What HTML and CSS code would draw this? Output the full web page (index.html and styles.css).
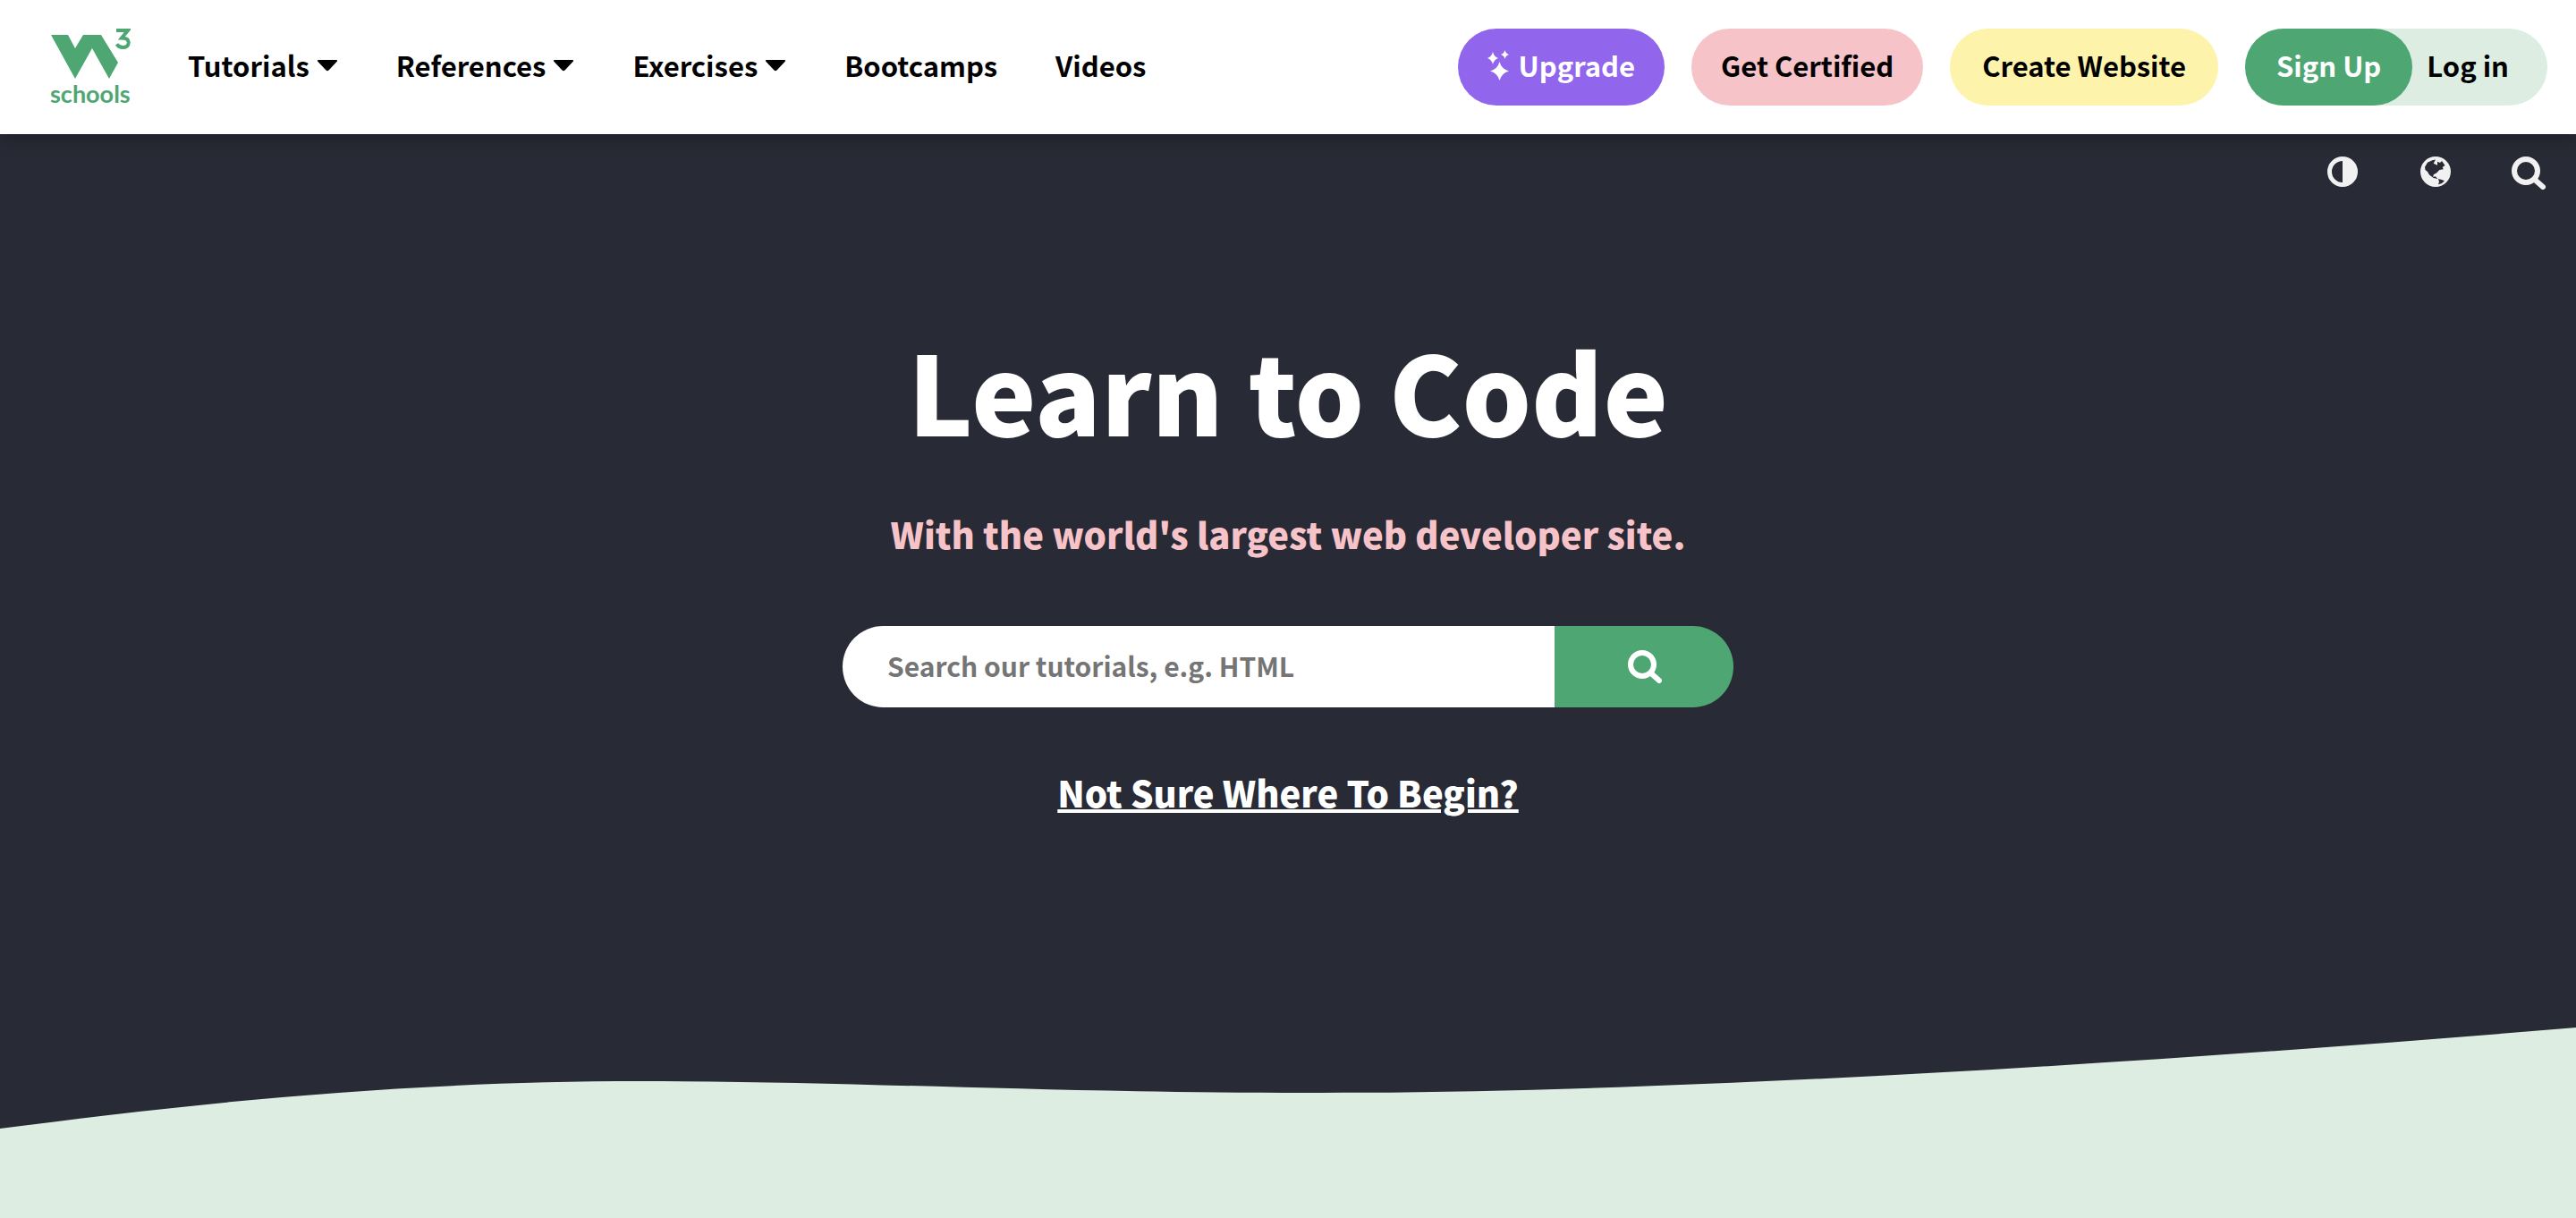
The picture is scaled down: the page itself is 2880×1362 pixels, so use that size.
FILE: index.html
```html
<!DOCTYPE html>
<html lang="en">
<head>
<meta charset="utf-8">
<title>W3Schools Online Web Tutorials</title>
<link rel="stylesheet" href="styles.css">
</head>
<body>
<header class="topbar">
  <a class="logo" href="#" aria-label="W3Schools home">
    <svg class="logo-mark" viewBox="0 0 90 60" aria-hidden="true">
      <path d="M1 8H20L28 23L37 8H57L76 39L66 57L47 23L28 57Z"/>
      <path class="logo-three" d="M74 3H87L80 11.500C85.500 11.500 87.800 13.500 87.800 16.600C87.800 20 85 22 81.500 22C78 22 76 20.500 74.500 18.300"/>
    </svg>
    <span class="logo-word">schools</span>
  </a>
  <nav class="menu">
    <button class="menu-item" type="button">Tutorials<svg class="caret" viewBox="0 0 24 14" aria-hidden="true"><path d="M2 1H22Q24 1 22.500 3L13.500 12.500Q12 14 10.500 12.500L1.500 3Q0 1 2 1Z"/></svg></button>
    <button class="menu-item" type="button">References<svg class="caret" viewBox="0 0 24 14" aria-hidden="true"><path d="M2 1H22Q24 1 22.500 3L13.500 12.500Q12 14 10.500 12.500L1.500 3Q0 1 2 1Z"/></svg></button>
    <button class="menu-item" type="button">Exercises<svg class="caret" viewBox="0 0 24 14" aria-hidden="true"><path d="M2 1H22Q24 1 22.500 3L13.500 12.500Q12 14 10.500 12.500L1.500 3Q0 1 2 1Z"/></svg></button>
    <a class="menu-item" href="#">Bootcamps</a>
    <a class="menu-item" href="#">Videos</a>
  </nav>
  <div class="actions">
    <a class="pill pill-upgrade" href="#"><svg class="sparkles" viewBox="0 0 24 34" aria-hidden="true"><path d="M13.500 13Q15.500 21 24 23.500Q15.500 26 13.500 34Q11.500 26 3 23.500Q11.500 21 13.500 13ZM6 2Q7.500 7.500 12 9Q7.500 10.500 6 16Q4.500 10.500 0 9Q4.500 7.500 6 2ZM19.500 0Q20.500 4 24 5Q20.500 6 19.500 10Q18.500 6 15 5Q18.500 4 19.500 0Z"/></svg>Upgrade</a>
    <a class="pill pill-certified" href="#">Get Certified</a>
    <a class="pill pill-website" href="#">Create Website</a>
    <div class="account">
      <a class="pill pill-signup" href="#">Sign Up</a>
      <a class="login" href="#">Log in</a>
    </div>
  </div>
</header>
<main class="hero">
  <div class="tools">
    <button class="tool" type="button" aria-label="Dark mode"><svg class="tool-icon" viewBox="0 0 40 40" aria-hidden="true"><circle class="ring" cx="20" cy="20" r="14.500"/><path d="M20 5A15 15 0 0 1 20 35Z"/></svg></button>
    <button class="tool" type="button" aria-label="Language"><svg class="tool-icon" viewBox="0 0 40 40" aria-hidden="true"><circle cx="20" cy="20" r="17"/><path class="land" d="M8 14.700L11 9.700L16.300 7.300L20 6.500L17.700 10.700L22 12.700L22 8.700L25 10L27 8L30.500 13L27.700 15L28.700 17.300L24.300 18L21.300 21.300L17.700 23.300L17.300 26L19.700 25.300L22.500 28L17.700 27L13 23.500L11 20L8.500 18ZM23 28L27 29L30 30.300L27 33L23 34.300L24 31.300Z"/></svg></button>
    <button class="tool" type="button" aria-label="Search"><svg class="tool-icon" viewBox="0 0 40 40" aria-hidden="true"><circle class="lens" cx="17" cy="19" r="13"/><path class="lens" d="M27 29L36 37"/></svg></button>
  </div>
  <section class="intro">
    <h1 class="title">Learn to Code</h1>
    <p class="tagline">With the world's largest web developer site.</p>
    <form class="search">
      <input class="search-field" type="text" placeholder="Search our tutorials, e.g. HTML" aria-label="Search our tutorials">
      <button class="search-button" type="button" aria-label="Search"><svg class="tool-icon" viewBox="0 0 40 40" aria-hidden="true"><circle class="lens" cx="18" cy="17" r="13"/><path class="lens" d="M28 27L37 35"/></svg></button>
    </form>
    <a class="begin" href="#">Not Sure Where To Begin?</a>
  </section>
  <svg class="wave" viewBox="0 0 2880 213" preserveAspectRatio="none" aria-hidden="true">
    <path d="M0 113C200 87 440 60 716 60C960 60 1160 73 1460 73C1860 74 2400 40 2880 0V213H0Z"/>
  </svg>
</main>
</body>
</html>
```
FILE: styles.css
```css
* { box-sizing: border-box; }
body {
  margin: 0;
  min-height: 100vh;
  display: flex;
  flex-direction: column;
  font-family: "Noto Sans CJK SC", "Noto Sans", sans-serif;
  font-size: 31px;
  font-weight: 700;
  line-height: 48px;
  color: #000;
  background: #ddede1;
}
a { color: inherit; text-decoration: none; }
button { font: inherit; color: inherit; background: none; border: 0; padding: 0; cursor: pointer; }
svg { display: block; flex: none; }

.topbar {
  position: relative;
  z-index: 1;
  display: flex;
  align-items: center;
  min-height: 150px;
  padding: 0 32px 0 56px;
  background: #fff;
  box-shadow: 0 4px 20px rgba(0, 0, 0, .3);
}
.logo { color: #4ea773; width: 90px; }
.logo-mark { width: 90px; height: 60px; fill: currentColor; }
.logo-three { fill: none; stroke: currentColor; stroke-width: 4; }
.logo-word { display: block; font: 700 27px/28px Lato, sans-serif; }
.menu { display: flex; gap: 65px; margin-left: 64px; }
.menu-item { display: flex; align-items: center; gap: 8px; padding-bottom: 4px; white-space: nowrap; }
.caret { width: 24px; height: 14px; }
.actions { display: flex; gap: 30px; margin-left: auto; }
.pill { display: flex; align-items: center; gap: 11px; height: 86px; padding: 0 33px 4px; border-radius: 43px; white-space: nowrap; }
.sparkles { width: 24px; height: 34px; fill: currentColor; }
.pill-upgrade { background: #9166ed; color: #fff; }
.pill-certified { background: #f6c3c8; }
.pill-website { padding: 0 36px 4px; background: #fdf3ab; }
.account { display: flex; align-items: center; background: #ddede1; border-radius: 43px; }
.pill-signup { padding: 0 35px 4px; background: #4ea773; color: #fff; }
.login { padding: 0 43px 4px 16px; white-space: nowrap; }

.hero { display: flex; flex-direction: column; flex: 1; background: #282a35; }
.tools { display: flex; justify-content: flex-end; gap: 64px; padding: 22px 33px 0; color: #f1f1f1; }
.tool-icon { width: 40px; height: 40px; fill: currentColor; }
.ring { fill: none; stroke: currentColor; stroke-width: 5; }
.tool-icon .land { fill: #282a35; }
.tool-icon .lens { fill: none; stroke: currentColor; stroke-width: 6; stroke-linecap: round; }
.intro { display: flex; flex-direction: column; align-items: center; padding-top: 128px; }
.title { margin: 0; font-size: 122px; line-height: 190px; font-weight: 900; color: #fff; }
.tagline { margin: 35px 0 0; font-size: 40px; line-height: 64px; font-weight: 900; color: #f6c3c8; }
.search { display: flex; width: 996px; max-width: 100%; height: 91px; margin: 71px 0 0; }
.search-field { flex: 1; min-width: 0; border: 0; padding: 0 50px 4px; border-radius: 46px 0 0 46px; background: #fff; font: inherit; font-size: 30px; }
.search-field::placeholder { color: #757575; opacity: 1; }
.search-button { display: flex; align-items: center; justify-content: center; width: 200px; border-radius: 0 46px 46px 0; background: #4ea773; color: #fff; }
.begin { margin-top: 63px; font-size: 40px; line-height: 64px; font-weight: 900; color: #fff; text-decoration: underline; text-decoration-thickness: 4px; }
.wave { width: 100%; height: 213px; margin-top: auto; fill: #ddede1; }
```
